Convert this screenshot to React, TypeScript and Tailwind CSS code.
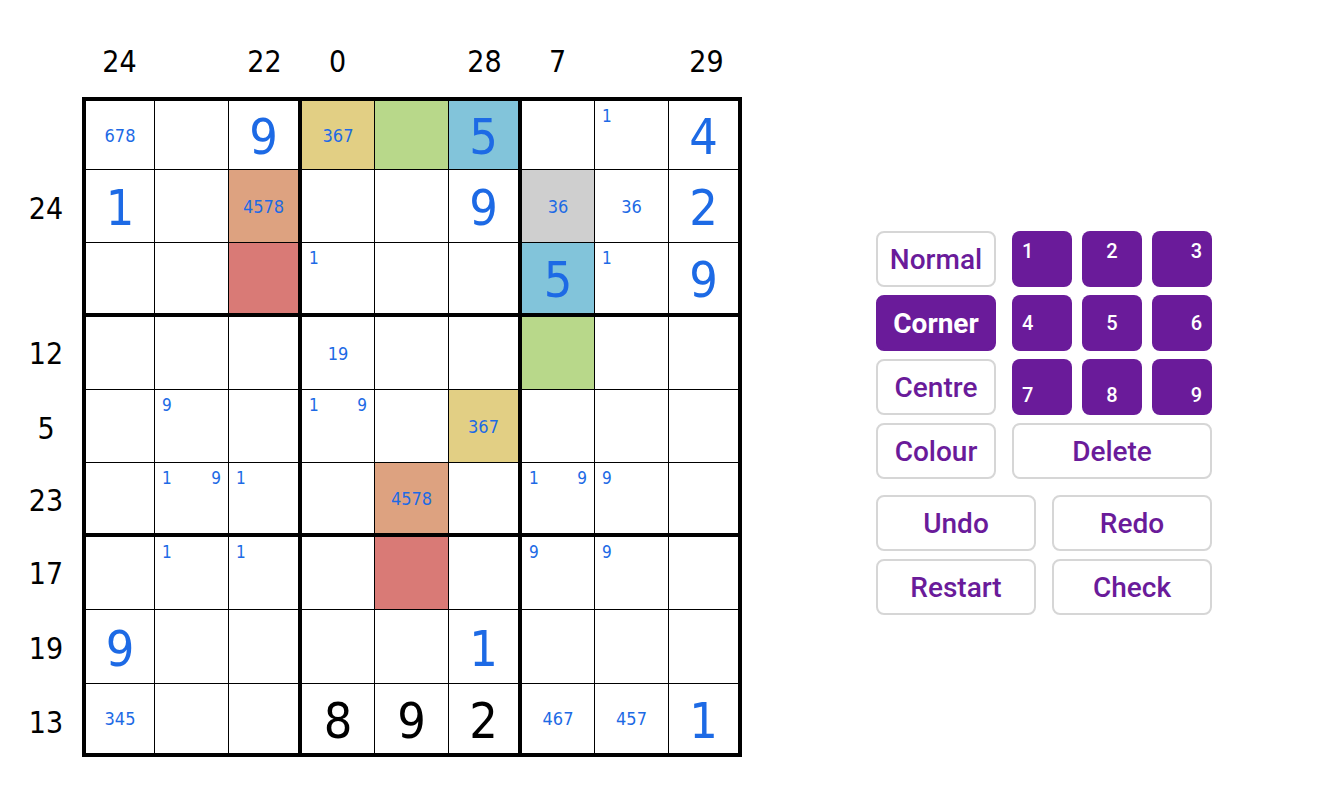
import { useState } from "react";
import clsx from "clsx";

type Cell = {
  value?: number;
  given?: boolean;
  centre?: string;
  left?: string;
  right?: string;
  colour?: string;
};

const GOLD = "bg-[#e2cf84]";
const GREEN = "bg-[#b8d88a]";
const BLUE = "bg-[#82c4da]";
const ORANGE = "bg-[#dda280]";
const RED = "bg-[#d97a76]";
const GREY = "bg-[#cfcfcf]";

const columnClues = ["24", "", "22", "0", "", "28", "7", "", "29"];
const rowClues = ["", "24", "", "12", "5", "23", "17", "19", "13"];

const board: Cell[][] = [
  [{ centre: "678" }, {}, { value: 9 }, { centre: "367", colour: GOLD }, { colour: GREEN }, { value: 5, colour: BLUE }, {}, { left: "1" }, { value: 4 }],
  [{ value: 1 }, {}, { centre: "4578", colour: ORANGE }, {}, {}, { value: 9 }, { centre: "36", colour: GREY }, { centre: "36" }, { value: 2 }],
  [{}, {}, { colour: RED }, { left: "1" }, {}, {}, { value: 5, colour: BLUE }, { left: "1" }, { value: 9 }],
  [{}, {}, {}, { centre: "19" }, {}, {}, { colour: GREEN }, {}, {}],
  [{}, { left: "9" }, {}, { left: "1", right: "9" }, {}, { centre: "367", colour: GOLD }, {}, {}, {}],
  [{}, { left: "1", right: "9" }, { left: "1" }, {}, { centre: "4578", colour: ORANGE }, {}, { left: "1", right: "9" }, { left: "9" }, {}],
  [{}, { left: "1" }, { left: "1" }, {}, { colour: RED }, {}, { left: "9" }, { left: "9" }, {}],
  [{ value: 9 }, {}, {}, {}, {}, { value: 1 }, {}, {}, {}],
  [{ centre: "345" }, {}, {}, { value: 8, given: true }, { value: 9, given: true }, { value: 2, given: true }, { centre: "467" }, { centre: "457" }, { value: 1 }],
];

const columnWidths = ["w-[72px]", "w-[74px]", "w-[70px]", "w-[76px]", "w-[74px]", "w-[70px]", "w-[76px]", "w-[74px]", "w-[74px]"];
const rowHeights = ["h-[72px]", "h-[73px]", "h-[71px]", "h-[76px]", "h-[73px]", "h-[71px]", "h-[76px]", "h-[74px]", "h-[74px]"];

function CellContent({ cell }: { cell: Cell }) {
  if (cell.value) {
    return (
      <div className={clsx("pt-[4px] text-center text-[50px] leading-[56px]", cell.given ? "text-black" : "text-[#1d6ae5]")}>
        {cell.value}
      </div>
    );
  }
  if (cell.centre) {
    return <div className="pt-[1px] text-center text-[18px] leading-[24px] text-[#1d6ae5]">{cell.centre}</div>;
  }
  if (cell.left || cell.right) {
    return (
      <div className="flex justify-between px-[7px] pt-[5px] text-[17px] leading-[20px] text-[#1d6ae5]">
        <span>{cell.left}</span>
        <span>{cell.right}</span>
      </div>
    );
  }
  return null;
}

function Board() {
  return (
    <table className="w-[734px] shrink-0 table-fixed border-separate border-spacing-0 font-['DejaVu_Sans_Condensed','Noto_Sans',sans-serif] text-black">
      <colgroup>
        <col className="w-[74px]" />
        {columnWidths.map((width, i) => (
          <col key={i} className={width} />
        ))}
      </colgroup>
      <thead>
        <tr className="h-[74px]">
          <td />
          {columnClues.map((clue, i) => (
            <th key={i} scope="col" className="p-0 pt-[3px] pl-[3px] text-center text-[30px] leading-[36px] font-normal">
              {clue}
            </th>
          ))}
        </tr>
      </thead>
      <tbody>
        {board.map((row, r) => (
          <tr key={r} className={rowHeights[r]}>
            <th scope="row" className="p-0 pt-[6px] pl-[2px] text-center text-[30px] leading-[36px] font-normal">
              {rowClues[r]}
            </th>
            {row.map((cell, c) => (
              <td
                key={c}
                className={clsx(
                  "border-black p-0",
                  r % 3 === 0 ? "border-t-4" : "border-t",
                  c % 3 === 0 ? "border-l-4" : "border-l",
                  r === 8 && "border-b-4",
                  c === 8 && "border-r-4",
                  cell.left || cell.right ? "align-top" : "align-middle",
                  cell.colour,
                )}
              >
                <CellContent cell={cell} />
              </td>
            ))}
          </tr>
        ))}
      </tbody>
    </table>
  );
}

const buttonBase = "h-14 cursor-pointer rounded-lg border-2 pt-[2px] text-[28px] leading-[32px]";
const outline = "border-[#d6d6d6] bg-white font-medium text-[#6a1b9a]";
const filled = "border-[#6a1b9a] bg-[#6a1b9a] font-bold text-white";

const digitRows = ["items-start", "items-center", "items-end"];
const digitColumns = ["justify-start", "justify-center", "justify-end"];

function Controls() {
  const [mode, setMode] = useState("Corner");
  return (
    <div className="flex w-[336px] flex-col gap-4 font-[Roboto,sans-serif]">
      <div className="flex gap-4">
        <div className="flex w-[120px] flex-col gap-2">
          {["Normal", "Corner", "Centre", "Colour"].map((name) => (
            <button
              key={name}
              type="button"
              aria-pressed={mode === name}
              onClick={() => setMode(name)}
              className={clsx(buttonBase, mode === name ? filled : outline)}
            >
              {name}
            </button>
          ))}
        </div>
        <div className="grid flex-1 grid-cols-3 gap-x-[10px] gap-y-2">
          {[1, 2, 3, 4, 5, 6, 7, 8, 9].map((n) => (
            <button
              key={n}
              type="button"
              className={clsx(
                "flex h-14 cursor-pointer rounded-lg bg-[#6a1b9a] px-[10px] py-[8px] text-[20px] leading-[24px] font-medium text-white",
                digitRows[Math.floor((n - 1) / 3)],
                digitColumns[(n - 1) % 3],
              )}
            >
              {n}
            </button>
          ))}
          <button type="button" className={clsx(buttonBase, outline, "col-span-3")}>
            Delete
          </button>
        </div>
      </div>
      <div className="grid grid-cols-2 gap-x-4 gap-y-2">
        {["Undo", "Redo", "Restart", "Check"].map((name) => (
          <button key={name} type="button" className={clsx(buttonBase, outline)}>
            {name}
          </button>
        ))}
      </div>
    </div>
  );
}

export default function App() {
  return (
    <main className="flex min-h-screen items-start bg-white pt-[23px] pl-2">
      <Board />
      <div className="ml-[27px] flex flex-1 justify-center pt-[208px]">
        <Controls />
      </div>
    </main>
  );
}
